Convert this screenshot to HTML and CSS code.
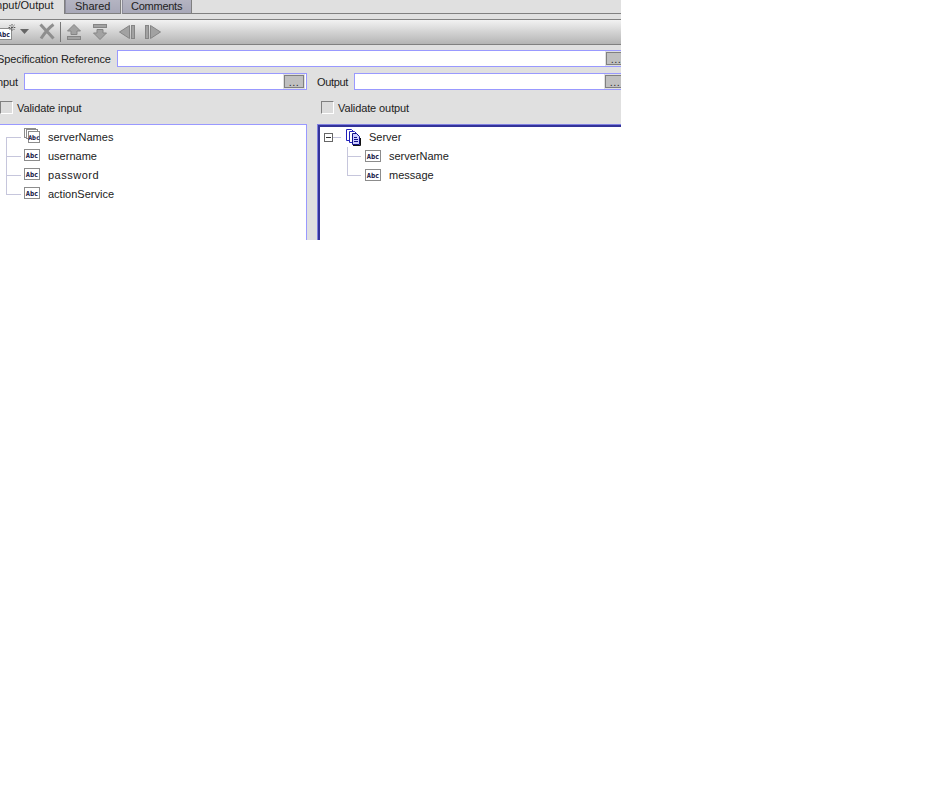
FILE: index.html
```html
<!DOCTYPE html>
<html lang="en">
<head>
<meta charset="utf-8">
<title>Input/Output</title>
<link rel="stylesheet" href="styles.css">
</head>
<body>
<svg class="defs" width="0" height="0" aria-hidden="true">
  <defs>
    <symbol id="abc" viewBox="0 0 16 12">
      <rect x="0.5" y="0.5" width="15" height="11" fill="#fff" stroke="#8c8c8c"/>
      <text x="8" y="8.500" text-anchor="middle" class="abc-text">Abc</text>
    </symbol>
  </defs>
</svg>
<main class="panel">
  <nav class="tabs">
    <div class="tab tab-active">Input/Output</div>
    <div class="tab tab-shared">Shared</div>
    <div class="tab tab-comments">Comments</div>
    <div class="tabs-rest"></div>
  </nav>
  <div class="strip"></div>
  <div class="toolbar">
    <svg class="ic ic-new" width="20" height="16" viewBox="0 0 20 16">
      <rect x="0.5" y="4.5" width="15" height="11" fill="#fff" stroke="#8c8c8c"/>
      <text x="8" y="12.500" text-anchor="middle" class="abc-text">Abc</text>
      <path d="M16 0v7M12.500 3.500h7M13.500 1l5 5M18.500 1l-5 5" stroke="#555" stroke-width="1" stroke-dasharray="1.600 1" fill="none"/>
    </svg>
    <svg class="ic ic-caret" width="9" height="5" viewBox="0 0 9 5"><path d="M0 0h9L4.500 5z" fill="#666"/></svg>
    <svg class="ic ic-x" width="16" height="17" viewBox="0 0 16 17"><path d="M1.500 1.500L7 7.500l2 2 5.500 6M14.500 1.500C11 4 7 8 2 15.500" fill="none" stroke="#8e8e8e" stroke-width="3"/></svg>
    <span class="sep"></span>
    <svg class="ic ic-up" width="14" height="16" viewBox="0 0 14 16"><path d="M7 .5L13.500 7H10v3.500H4V7H.5z" fill="#a2a2a2" stroke="#858585"/><rect x=".5" y="12.500" width="13" height="3" fill="#a2a2a2" stroke="#858585"/></svg>
    <svg class="ic ic-down" width="14" height="16" viewBox="0 0 14 16"><rect x=".5" y=".5" width="13" height="3" fill="#a2a2a2" stroke="#858585"/><path d="M4 5.500h6V9h3.500L7 15.500.5 9H4z" fill="#a2a2a2" stroke="#858585"/></svg>
    <svg class="ic ic-left" width="16" height="14" viewBox="0 0 16 14"><path d="M10.500 .5v13L.5 7z" fill="#a2a2a2" stroke="#858585"/><rect x="12.500" y=".5" width="3" height="13" fill="#a2a2a2" stroke="#858585"/></svg>
    <svg class="ic ic-right" width="16" height="14" viewBox="0 0 16 14"><rect x=".5" y=".5" width="3" height="13" fill="#a2a2a2" stroke="#858585"/><path d="M5.500 .5v13L15.500 7z" fill="#a2a2a2" stroke="#858585"/></svg>
  </div>
  <div class="spec-row">
    <label class="lbl lbl-spec">Specification Reference</label>
    <div class="field field-spec"><span class="browse browse-spec">...</span></div>
  </div>
  <div class="io-row">
    <label class="lbl lbl-input">Input</label>
    <div class="field field-input"><span class="browse">...</span></div>
    <label class="lbl lbl-output">Output</label>
    <div class="field field-output"><span class="browse browse-out">...</span></div>
  </div>
  <div class="check-row">
    <div class="check check-in"><span class="box"></span><span class="lbl">Validate input</span></div>
    <div class="check check-out"><span class="box"></span><span class="lbl">Validate output</span></div>
  </div>
  <div class="trees">
    <section class="tree tree-in">
      <div class="node"><span class="branch branch-first"></span>
        <svg class="node-ic multi" width="16" height="15" viewBox="0 0 16 15">
          <rect x=".5" y=".5" width="11" height="9" fill="#fff" stroke="#8c8c8c"/>
          <rect x="2.500" y="1.500" width="11" height="9" fill="#fff" stroke="#8c8c8c"/>
          <rect x="4.500" y="3.500" width="11" height="11" fill="#fff" stroke="#8c8c8c"/>
          <text x="10" y="12" text-anchor="middle" class="abc-text abc-small">Abc</text>
        </svg>
        <span class="name">serverNames</span></div>
      <div class="node"><span class="branch"></span><svg class="node-ic" width="16" height="12"><use href="#abc"/></svg><span class="name">username</span></div>
      <div class="node"><span class="branch"></span><svg class="node-ic" width="16" height="12"><use href="#abc"/></svg><span class="name name-wide">password</span></div>
      <div class="node"><span class="branch branch-last"></span><svg class="node-ic" width="16" height="12"><use href="#abc"/></svg><span class="name">actionService</span></div>
    </section>
    <section class="tree tree-out">
      <div class="node root">
        <span class="toggle"></span><span class="stub"></span>
        <svg class="doc" width="15" height="17" viewBox="0 0 15 17">
          <path d="M.5.500h5l2 2v9h-7z" fill="#fff" stroke="#2222bb"/>
          <path d="M3.500 2.500h5l2 2v9h-7z" fill="#fff" stroke="#2222bb"/>
          <path d="M6.500 4.500h4l3 3v8h-7z" fill="#ccccff" stroke="#111188"/>
          <path d="M8 8.500h3M8 10.500h4M8 12.500h4" stroke="#111188"/>
          <path d="M7 16.500h7.500V9" stroke="#111" fill="none"/>
        </svg>
        <span class="name name-root">Server</span></div>
      <div class="children">
        <div class="node"><span class="branch branch-child"></span><svg class="node-ic" width="16" height="12"><use href="#abc"/></svg><span class="name">serverName</span></div>
        <div class="node"><span class="branch branch-child branch-last"></span><svg class="node-ic" width="16" height="12"><use href="#abc"/></svg><span class="name">message</span></div>
      </div>
    </section>
  </div>
</main>
</body>
</html>
```
FILE: styles.css
```css
html, body {
  margin: 0;
  padding: 0;
  background: #fff;
}
.defs { position: absolute; }
.panel {
  width: 621px;
  height: 240px;
  overflow: hidden;
  background: #e0e0e0;
  font: 11px/13px "Liberation Sans", Arial, sans-serif;
  color: #222;
  display: flex;
  flex-direction: column;
}
.tabs {
  display: flex;
  height: 14px;
  flex: none;
}
.tab {
  box-sizing: border-box;
  flex: none;
  line-height: 12px;
}
.tab-active {
  width: 65px;
  height: 14px;
  text-indent: -7px;
  line-height: 10px;
  white-space: nowrap;
  border-right: 1px solid #808080;
}
.tab-shared, .tab-comments {
  background: linear-gradient(#b4b4c2, #a8a8b8);
  border-right: 1px solid #808080;
  border-left: 1px solid #8c8c9a;
  border-bottom: 1px solid #808080;
  height: 14px;
}
.tab-shared { width: 56px; padding-left: 9px; }
.tab-comments { width: 70px; margin-left: 1px; padding-left: 8px; letter-spacing: -.25px; }
.tabs-rest {
  flex: 1;
  border-bottom: 1px solid #808080;
}
.strip {
  height: 5px;
  flex: none;
  border-bottom: 1px solid #808080;
}
.toolbar {
  height: 24px;
  flex: none;
  display: flex;
  align-items: flex-start;
  background: linear-gradient(#f2f2f2, #b4b4b4);
  border-bottom: 1px solid #808080;
}
.ic { flex: none; display: block; }
.ic-new { margin: 4px 0 0 -4px; }
.ic-caret { margin: 9px 0 0 4px; }
.ic-x { margin: 3px 0 0 10px; }
.sep { width: 1px; height: 20px; background: #777; margin: 2px 0 0 5px; flex: none; }
.ic-up { margin: 4px 0 0 6px; }
.ic-down { margin: 4px 0 0 12px; }
.ic-left { margin: 5px 0 0 12px; }
.ic-right { margin: 5px 0 0 10px; }
.abc-text {
  font: bold 7px "DejaVu Sans Mono", monospace;
  fill: #111144;
}
.abc-small { font-size: 6.500px; }
.lbl {
  white-space: nowrap;
  flex: none;
  letter-spacing: -.1px;
  padding-top: 2px;
}
.spec-row {
  display: flex;
  align-items: center;
  height: 17px;
  margin-top: 5px;
  flex: none;
}
.lbl-spec { width: 120px; margin-left: -3px; }
.field {
  box-sizing: border-box;
  height: 17px;
  background: #fff;
  border: 1px solid #9999ff;
  border-right: none;
  display: flex;
  justify-content: flex-end;
  align-items: center;
  flex: none;
}
.field-spec { width: 504px; }
.browse {
  box-sizing: border-box;
  width: 20px;
  height: 13px;
  flex: none;
  margin-right: 2px;
  background: #c0c0c0;
  border: 1px solid #808080;
  box-shadow: 0 0 0 1px #e0e0e0;
  font-size: 11px;
  line-height: 12px;
  letter-spacing: .5px;
  text-align: center;
  color: #333;
}
.browse-spec { margin-right: -5px; }
.io-row {
  display: flex;
  align-items: center;
  height: 17px;
  margin-top: 6px;
  flex: none;
}
.lbl-input { width: 24px; text-indent: -6px; }
.field-input { width: 283px; border-right: 1px solid #9999ff; }
.lbl-output { width: 37px; margin-left: 10px; letter-spacing: -.35px; }
.field-output { width: 270px; }
.browse-out { margin-right: -1px; }
.check-row {
  display: flex;
  height: 13px;
  margin-top: 11px;
  flex: none;
}
.check { display: flex; align-items: center; flex: none; }
.check-in { width: 321px; }
.box {
  box-sizing: border-box;
  width: 13px;
  height: 13px;
  margin-right: 4px;
  border: 1px solid #808080;
  border-right-color: #fff;
  border-bottom-color: #fff;
  background: #dcdcdc;
  flex: none;
}
.trees {
  display: flex;
  margin-top: 10px;
  flex: 1;
  min-height: 0;
}
.tree {
  box-sizing: border-box;
  background: #fff;
  flex: none;
  height: 130px;
}
.tree-in {
  width: 307px;
  border-top: 1px solid #9999ff;
  border-right: 1px solid #9999ff;
  padding: 3px 0 0 6px;
}
.tree-out {
  width: 320px;
  margin-left: 10px;
  border: 1px solid #8080e0;
  box-shadow: inset 0 0 0 2px #333399;
  padding: 3px 0 0 6px;
}
.node {
  display: flex;
  align-items: center;
  height: 19px;
}
.branch {
  width: 15px;
  height: 19px;
  margin-right: 3px;
  flex: none;
  background:
    linear-gradient(#c6c6dc, #c6c6dc) 0 0 / 1px 100% no-repeat,
    linear-gradient(#c6c6dc, #c6c6dc) 0 9px / 100% 1px no-repeat;
}
.branch-first {
  background:
    linear-gradient(#c6c6dc, #c6c6dc) 0 9px / 1px 10px no-repeat,
    linear-gradient(#c6c6dc, #c6c6dc) 0 9px / 100% 1px no-repeat;
}
.branch-last {
  background:
    linear-gradient(#c6c6dc, #c6c6dc) 0 0 / 1px 10px no-repeat,
    linear-gradient(#c6c6dc, #c6c6dc) 0 9px / 100% 1px no-repeat;
}
.node-ic { flex: none; display: block; margin-bottom: 4px; }
.children .node-ic { margin-bottom: 2px; }
.name { margin-left: 8px; white-space: nowrap; }
.name-wide { letter-spacing: .5px; }
.toggle {
  box-sizing: border-box;
  width: 9px;
  height: 9px;
  flex: none;
  border: 1px solid #666;
  background: linear-gradient(#333, #333) center / 5px 1px no-repeat #fff;
}
.stub { width: 8px; height: 1px; background: #c6c6dc; margin-right: 5px; flex: none; }
.doc { flex: none; display: block; }
.name-root { margin-left: 8px; }
.children { margin-left: 23px; }
.branch-child { width: 14px; margin-right: 4px; }
```
